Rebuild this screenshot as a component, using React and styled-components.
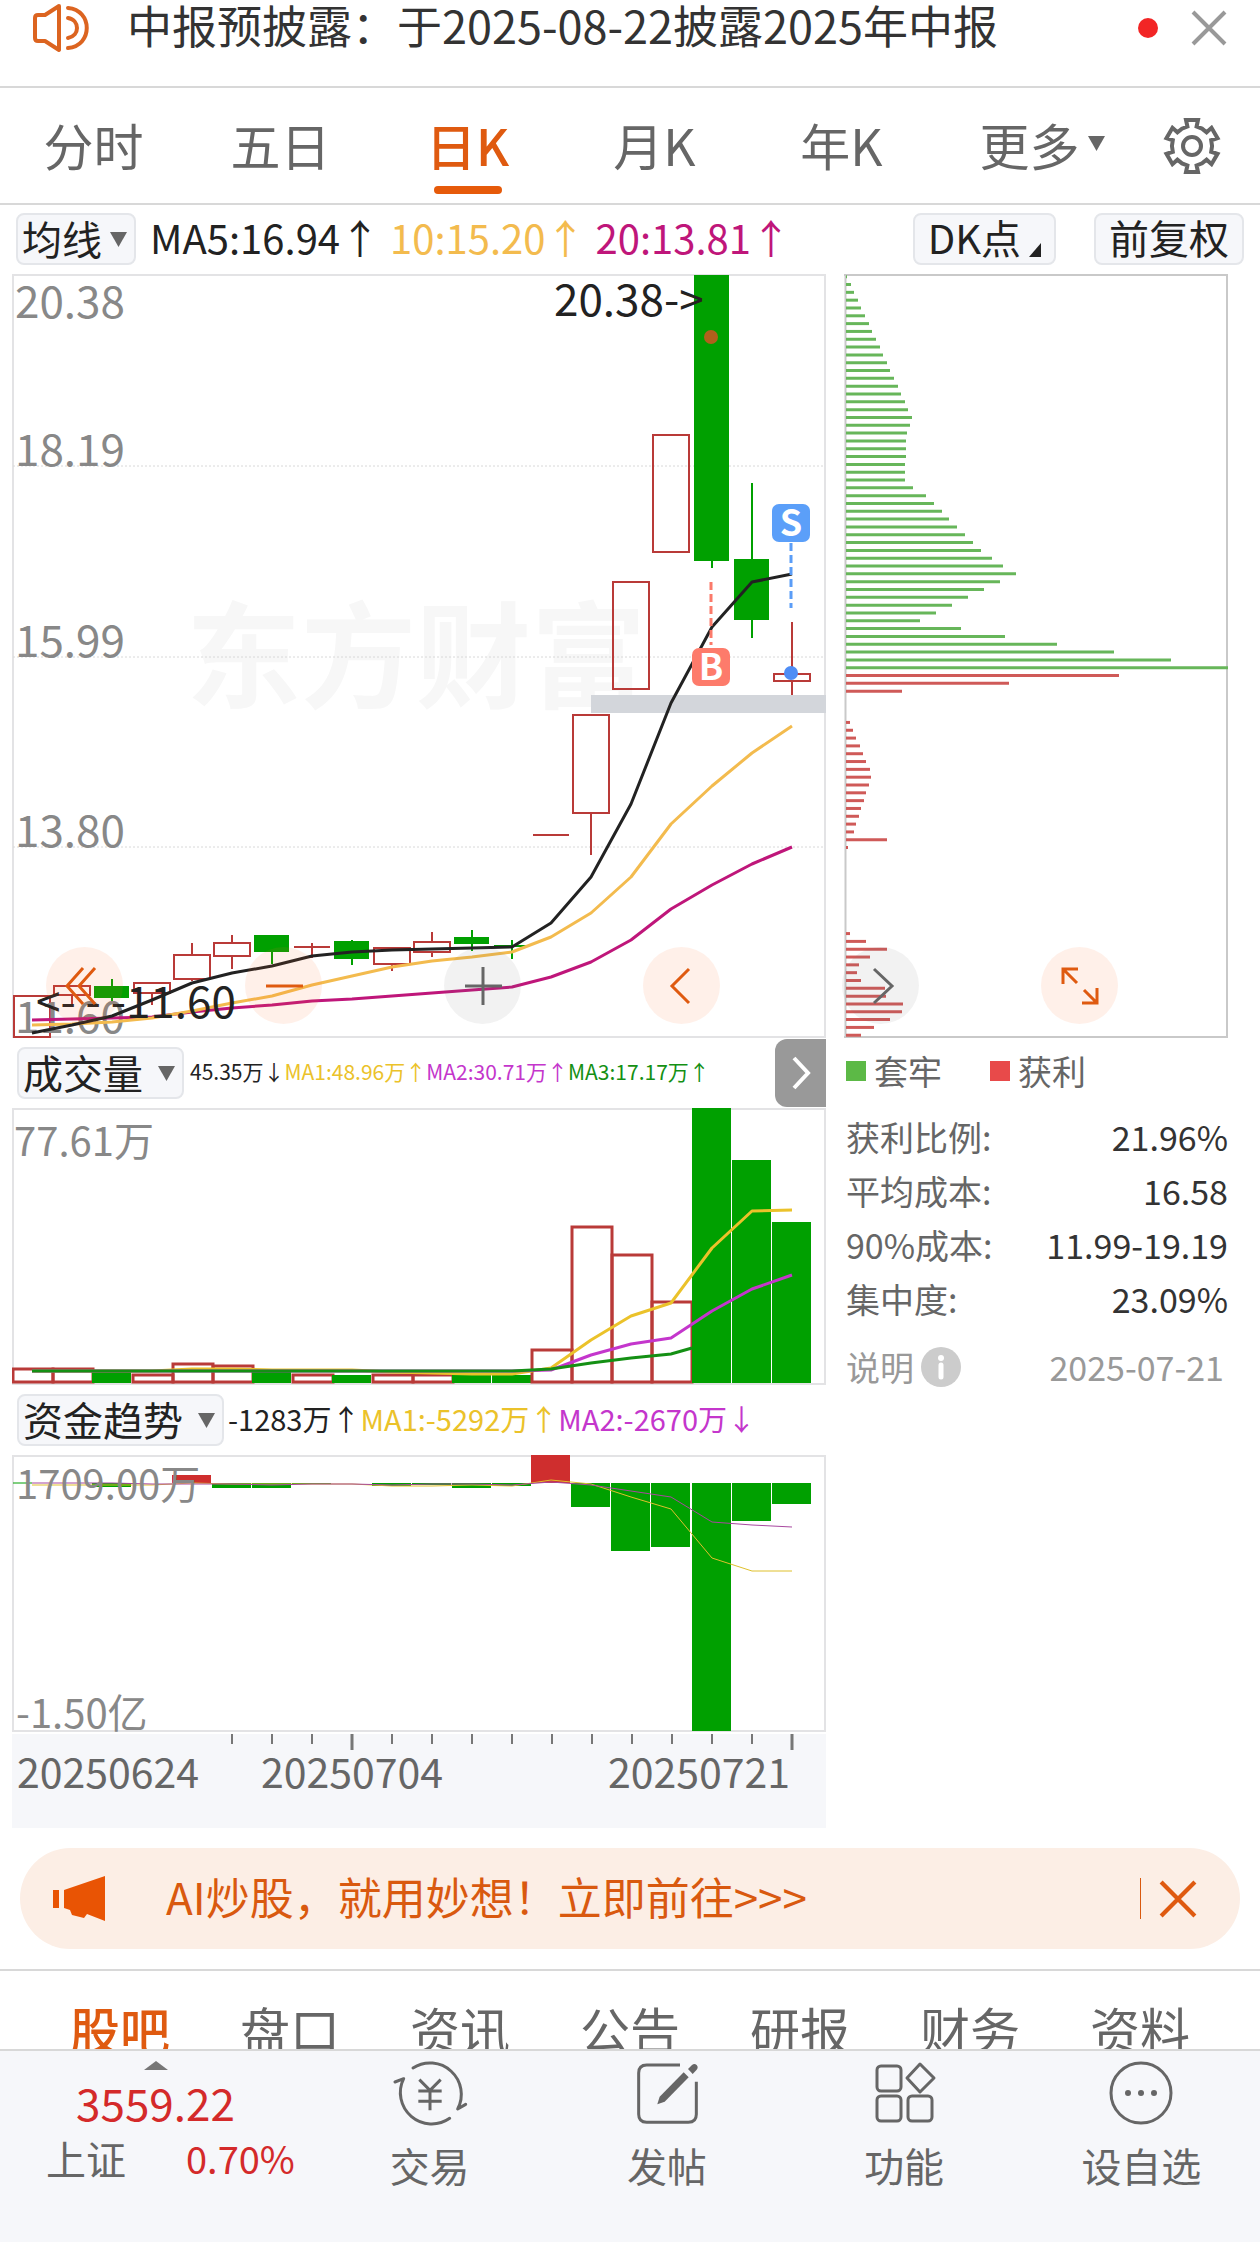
import React from "react";
import styled, { createGlobalStyle } from "styled-components";

const FONT = '"Noto Sans CJK SC", "Noto Sans", sans-serif';
const ORANGE = "#df5a10";
const GREEN = "#00a000";
const RED = "#b93a38";

const Global = createGlobalStyle`
  *, *::before, *::after { box-sizing: border-box; }
  body { margin: 0; background: #fff; font-family: ${FONT}; color: #262626; }
  button, select { font: inherit; color: inherit; background: none; border: 0; padding: 0; margin: 0; cursor: pointer; }
  svg { display: block; }
  svg text { font-family: ${FONT}; }
  a { color: inherit; text-decoration: none; }
`;

const Page = styled.div`
  display: flex;
  flex-direction: column;
  min-height: 100vh;
`;

/* ---------- notice ---------- */
const Notice = styled.header`
  display: flex;
  align-items: center;
  height: 88px;
  padding: 0 33px 31px;
  border-bottom: 2px solid #d8d8d8;
  font-size: 45px;
  line-height: 56px;
  color: #333;
  white-space: nowrap;
`;
const NoticeText = styled.a`
  margin-left: 36px;
  padding-bottom: 6px;
  flex: 1;
`;
const Dot = styled.span`
  width: 20px;
  height: 20px;
  border-radius: 50%;
  background: #f22525;
  margin-right: 33px;
`;

/* ---------- period tabs ---------- */
const Periods = styled.nav`
  display: grid;
  grid-template-columns: repeat(5, 187fr) 214fr 85fr;
  height: 117px;
  padding-right: 26px;
  border-bottom: 2px solid #d8d8d8;
`;
const Period = styled.button`
  display: flex;
  align-items: center;
  justify-content: center;
  gap: 8px;
  position: relative;
  padding-bottom: ${(p) => (p.$icon ? 0 : 4)}px;
  font-size: 50px;
  line-height: 60px;
  color: ${(p) => (p.$active ? ORANGE : "#666")};
  font-weight: ${(p) => (p.$active ? 500 : 400)};
  &::after {
    content: "";
    display: ${(p) => (p.$active ? "block" : "none")};
    position: absolute;
    left: 50%;
    bottom: 9px;
    width: 68px;
    height: 8px;
    margin-left: -34px;
    border-radius: 4px;
    background: #e65a0a;
  }
`;

/* ---------- average line toolbar ---------- */
const Toolbar = styled.div`
  display: flex;
  align-items: center;
  height: 69px;
  padding: 0 16px 2px;
  font-size: 40px;
  line-height: 48px;
  white-space: nowrap;
`;
const chip = `
  height: 52px;
  border: 2px solid #e4e6ea;
  border-radius: 8px;
  background: #f6f7fa;
  color: #222;
  font-size: 40px;
  line-height: 44px;
`;
const ChipButton = styled.button`
  ${chip}
  display: flex;
  align-items: center;
  gap: 8px;
  padding: 0 13px 4px;
  margin-left: ${(p) => (p.$push ? "auto" : "38px")};
`;
const Corner = styled.span`
  align-self: flex-end;
  margin-bottom: 2px;
  border-left: 12px solid transparent;
  border-bottom: 14px solid #222;
`;
const Picker = styled.span`
  position: relative;
  display: block;
  svg {
    position: absolute;
    right: 9px;
    top: 19px;
    pointer-events: none;
  }
`;
const PickerSelect = styled.select`
  ${chip}
  display: block;
  appearance: none;
  width: ${(p) => p.$w}px;
  padding: 0 0 2px 4px;
`;
const Values = styled.div`
  display: flex;
  gap: ${(p) => p.$gap || 0}px;
  margin-left: ${(p) => p.$left || 0}px;
  padding-bottom: 4px;
  font-size: ${(p) => p.$size}px;
`;
const Value = styled.span`
  color: ${(p) => p.$color};
`;

/* ---------- charts ---------- */
const Board = styled.main`
  position: relative;
  display: grid;
  grid-template-columns: 814fr 384fr;
  column-gap: 18px;
  padding: 0 32px 0 12px;
`;
const Column = styled.section`
  min-width: 0;
`;
const Chart = styled.svg`
  width: 100%;
  height: auto;
`;
const IndicatorBar = styled.div`
  display: flex;
  align-items: center;
  height: 70px;
  padding-left: 5px;
  line-height: 48px;
  white-space: nowrap;
`;
const Expand = styled.button`
  display: flex;
  align-items: center;
  justify-content: center;
  align-self: stretch;
  width: 51px;
  margin: 1px 0 1px auto;
  border-radius: 12px 0 0 12px;
  background: #999;
`;
const Controls = styled.div`
  position: absolute;
  left: 46px;
  right: 142px;
  top: 673px;
  display: flex;
  justify-content: space-between;
`;
const Round = styled.button`
  width: 77px;
  height: 77px;
  border-radius: 50%;
  display: flex;
  align-items: center;
  justify-content: center;
  color: ${(p) => (p.$muted ? "#666" : ORANGE)};
  background: ${(p) => (p.$muted ? "rgba(110,110,110,.09)" : "rgba(255,110,40,.1)")};
`;

/* ---------- chip statistics ---------- */
const Legend = styled.div`
  display: flex;
  align-items: center;
  gap: 48px;
  height: 66px;
  padding-left: 2px;
  font-size: 34px;
  line-height: 48px;
  color: #666;
`;
const Key = styled.span`
  display: flex;
  align-items: center;
  gap: 8px;
  &::before {
    content: "";
    width: 20px;
    height: 20px;
    background: ${(p) => p.$color};
  }
`;
const Stats = styled.dl`
  margin: 6px 0 0;
  padding-left: 2px;
  font-size: 34px;
  line-height: 54px;
`;
const Stat = styled.div`
  display: flex;
  justify-content: space-between;
  white-space: nowrap;
  dt { color: #666; }
  dd { margin: 0; color: #333; }
`;
const Footnote = styled.div`
  display: flex;
  align-items: center;
  justify-content: space-between;
  margin-top: 14px;
  padding: 0 4px 0 2px;
  font-size: 34px;
  line-height: 54px;
  color: #999;
`;
const Explain = styled.button`
  display: flex;
  align-items: center;
  gap: 7px;
`;

/* ---------- banner ---------- */
const Banner = styled.aside`
  display: flex;
  align-items: center;
  height: 101px;
  margin: 20px;
  padding: 0 43px 0 33px;
  border-radius: 51px;
  background: #fceee5;
  color: #d9590f;
  font-size: 44px;
  line-height: 56px;
  white-space: nowrap;
`;
const BannerLink = styled.a`
  flex: 1;
  margin-left: 60px;
  padding-bottom: 6px;
`;
const BannerClose = styled.button`
  display: flex;
  align-items: center;
  height: 41px;
  padding-left: 18px;
  border-left: 1px solid #d9590f;
`;

/* ---------- section tabs ---------- */
const Sections = styled.nav`
  display: flex;
  height: 80px;
  padding: 27px 35px 0;
  overflow: hidden;
  border-top: 2px solid #d8d8d8;
`;
const Section = styled.button`
  flex: 1;
  align-self: flex-start;
  font-size: 50px;
  line-height: 60px;
  color: ${(p) => (p.$active ? ORANGE : "#666")};
  font-weight: ${(p) => (p.$active ? 500 : 400)};
`;

/* ---------- bottom bar ---------- */
const BottomBar = styled.footer`
  display: flex;
  flex: 1;
  min-height: 193px;
  border-top: 2px solid #d8d8d8;
  background: #f6f7fa;
  color: #666;
  font-size: 40px;
  line-height: 56px;
`;
const Index = styled.button`
  display: flex;
  flex-direction: column;
  align-items: center;
  width: 311px;
  padding-top: 10px;
`;
const Price = styled.span`
  margin-top: 4px;
  font-size: 44px;
  color: #d42a2a;
`;
const Change = styled.span`
  display: flex;
  gap: 60px;
  width: 100%;
  padding-left: 46px;
  b { font-weight: 400; font-size: 38px; color: #d42a2a; }
`;
const Action = styled.button`
  display: flex;
  flex-direction: column;
  align-items: center;
  flex: 1;
  gap: 10px;
  padding-top: 6px;
`;

/* ---------- data ---------- */
const cx = (i) => 32 + i * 40 - (i > 12 && i < 17 ? 1 : 0);

const candles = [
  { t: "h", a: 996, b: 1037 },
  { t: "h", a: 986, b: 995, lo: 1004 },
  { t: "g", a: 986, b: 998, hi: 979, lo: 1001 },
  { t: "h", a: 983, b: 993, lo: 1005 },
  { t: "h", a: 955, b: 979, hi: 943, lo: 981 },
  { t: "h", a: 943, b: 956, hi: 935, lo: 969 },
  { t: "g", a: 935, b: 952, lo: 964 },
  { t: "d", a: 947, b: 947, hi: 943, lo: 958 },
  { t: "g", a: 941, b: 959, hi: 940, lo: 965 },
  { t: "h", a: 948, b: 964, lo: 971 },
  { t: "h", a: 942, b: 952, hi: 932, lo: 957 },
  { t: "g", a: 937, b: 944, hi: 930, lo: 951 },
  { t: "g", a: 945, b: 947, hi: 940, lo: 959 },
  { t: "d", a: 835, b: 835 },
  { t: "h", a: 715, b: 813, lo: 855 },
  { t: "h", a: 582, b: 689 },
  { t: "h", a: 435, b: 552 },
  { t: "g", a: 275, b: 561, lo: 568 },
  { t: "g", a: 559, b: 620, hi: 483, lo: 638 },
  { t: "h", a: 674, b: 681, hi: 622, lo: 695 },
];
const ma5 = [1033, 1025, 1016, 1000, 983, 973, 966, 956, 952, 950, 949, 948, 947, 923, 877, 804, 703, 627, 582, 574];
const ma10 = [1025, 1024, 1022, 1018, 1011, 1003, 996, 985, 976, 967, 961, 957, 952, 937, 913, 877, 824, 786, 753, 726];
const ma20 = [1020, 1019, 1018, 1017, 1012, 1008, 1005, 1001, 999, 996, 993, 990, 987, 977, 962, 940, 909, 885, 864, 847];

const volumes = [
  ["h", 1369], ["h", 1369], ["g", 1371], ["h", 1375], ["h", 1364], ["h", 1366], ["g", 1370],
  ["h", 1375], ["g", 1375], ["h", 1375], ["h", 1375], ["g", 1375], ["g", 1375], ["h", 1350],
  ["h", 1227], ["h", 1255], ["h", 1302], ["g", 1108], ["g", 1160], ["g", 1222],
];
const vol1 = [1371, 1371, 1371, 1371, 1369, 1369, 1370, 1370, 1370, 1372, 1373, 1374, 1374, 1368, 1340, 1316, 1303, 1248, 1211, 1210];
const vol2 = [1371, 1371, 1371, 1371, 1371, 1371, 1371, 1371, 1371, 1371, 1371, 1371, 1371, 1370, 1355, 1344, 1338, 1311, 1289, 1275];
const vol3 = [1371, 1371, 1371, 1371, 1371, 1371, 1371, 1371, 1371, 1371, 1371, 1371, 1371, 1369, 1363, 1358, 1354, 1342, 1332, 1322];

const funds = [0, 0, 4, 0, -8, 5, 5, 1, 0, 3, 2, 5, 3, -28, 24, 68, 64, 248, 38, 21];
const fund1 = [1485, 1485, 1485, 1485, 1483, 1484, 1484, 1484, 1484, 1486, 1486, 1485, 1486, 1480, 1484, 1497, 1509, 1558, 1571, 1571];
const fund2 = [1483, 1483, 1483, 1484, 1484, 1484, 1485, 1484, 1484, 1485, 1484, 1484, 1485, 1482, 1485, 1491, 1497, 1522, 1525, 1527];

const trapped = [
  1, 5, 8, 12, 15, 19, 23, 26, 30, 34, 37, 41, 44, 48, 52, 55, 59, 62, 66, 64, 61, 60, 60, 60, 59, 59, 59,
  67, 80, 88, 96, 103, 111, 119, 127, 135, 146, 157, 170, 154, 138, 122, 106, 90, 74, 115, 159, 211, 268, 325, 382,
];
const profit = [
  [51, [273, 163, 56]],
  [57, [4, 7, 10, 14, 17, 20, 24, 25, 23, 20, 18, 15, 13, 10, 8, 41, 2]],
  [84, [4, 20, 41, 24, 13, 11, 15, 39, 40, 57, 56, 44, 28, 15]],
];

const path = (ys) => ys.map((y, i) => `${cx(i)},${y}`).join(" ");

const Line = ({ ys, color, width = 3 }) => (
  <polyline points={path(ys)} fill="none" stroke={color} strokeWidth={width} strokeLinejoin="round" />
);

const Triangle = ({ w = 17, h = 15 }) => (
  <svg width={w} height={h} viewBox="0 0 17 15" aria-hidden="true">
    <path d="M0 0H17L8.5 15Z" fill="#666" />
  </svg>
);

const Cross = ({ size, color, width }) => (
  <svg width={size} height={size} viewBox="0 0 36 36" aria-hidden="true">
    <path d="M2 2L34 34M34 2L2 34" stroke={color} strokeWidth={width} fill="none" />
  </svg>
);

function Candle({ i, c }) {
  const x = cx(i);
  const color = c.t === "g" ? GREEN : RED;
  return (
    <g stroke={color} strokeWidth="2">
      {c.hi && <path d={`M${x} ${c.hi}V${c.a}`} />}
      {c.lo && <path d={`M${x} ${c.b}V${c.lo}`} />}
      {c.t === "h" && <rect x={x - 18} y={c.a} width="36" height={c.b - c.a} fill="none" />}
      {c.t === "g" && <rect x={x - 18} y={c.a} width="35" height={c.b - c.a} fill={GREEN} stroke="none" />}
      {c.t === "d" && <path d={`M${x - 18} ${c.a}H${x + 18}`} />}
    </g>
  );
}

function Badge({ x, y, color, children }) {
  return (
    <g>
      <rect x={x - 19} y={y} width="38" height="38" rx="7" fill={color} />
      <text x={x} y={y + 32} fontSize="36" fontWeight="700" textAnchor="middle" fill="#fff">{children}</text>
    </g>
  );
}

function PriceChart() {
  return (
    <Chart viewBox="12 274 814 764" role="img" aria-label="日K">
      <text x="186" y="699" fontSize="115" fontWeight="700" fill="#f7f7f7">东方财富</text>
      <rect x="13" y="275" width="812" height="762" fill="none" stroke="#e3e3e5" strokeWidth="2" />
      {[466, 657, 847].map((y) => (
        <path key={y} d={`M13 ${y}H825`} stroke="#d8d8d8" strokeWidth="1" strokeDasharray="2 2" />
      ))}
      <rect x="591" y="695" width="235" height="18" fill="#d3d6db" />
      {candles.map((c, i) => <Candle key={i} i={i} c={c} />)}
      <g fontSize="44" fill="#888">
        <text x="15" y="318">20.38</text>
        <text x="15" y="466">18.19</text>
        <text x="15" y="657">15.99</text>
        <text x="15" y="847">13.80</text>
        <text x="15" y="1033">11.60</text>
      </g>
      <Line ys={ma20} color="#bf167a" />
      <Line ys={ma10} color="#f3bb4e" />
      <Line ys={ma5} color="#222" />
      <g fontSize="44" fill="#222">
        <text x="554" y="316">20.38-&gt;</text>
        <text x="36" y="1018">&lt;- - -11.60</text>
      </g>
      <circle cx="711" cy="337" r="7" fill="#b0601c" />
      <path d="M711 582V645" stroke="#fb7a6a" strokeWidth="3" strokeDasharray="8 4" />
      <path d="M791 543V608" stroke="#5b9df7" strokeWidth="3" strokeDasharray="8 4" />
      <circle cx="791" cy="673" r="7" fill="#4f8df5" />
      <Badge x={711} y={648} color="#fd7b6b">B</Badge>
      <Badge x={791} y={504} color="#5b9ff9">S</Badge>
    </Chart>
  );
}

function VolumeChart() {
  return (
    <Chart viewBox="12 1108 814 277" role="img" aria-label="成交量">
      <rect x="13" y="1109" width="812" height="275" fill="none" stroke="#e3e3e5" strokeWidth="2" />
      <text x="14" y="1156" fontSize="40" fill="#888">77.61万</text>
      {volumes.map(([t, y], i) =>
        t === "h" ? (
          <rect key={i} x={cx(i) - 19} y={y} width="40" height={1382 - y} fill="none" stroke={RED} strokeWidth="3" />
        ) : (
          <rect key={i} x={cx(i) - 20} y={y} width="39" height={1383 - y} fill={GREEN} />
        )
      )}
      <Line ys={vol1} color="#ebc22a" />
      <Line ys={vol2} color="#c436cc" />
      <polyline points={path(vol3.slice(0, 17)) + " 692,1348"} fill="none" stroke="#149014" strokeWidth="3" />
    </Chart>
  );
}

function FundChart() {
  return (
    <Chart viewBox="12 1455 814 277" role="img" aria-label="资金趋势">
      <rect x="13" y="1456" width="812" height="275" fill="none" stroke="#e3e3e5" strokeWidth="2" />
      <path d="M13 1483H32" stroke={GREEN} strokeWidth="1" />
      {funds.map((v, i) =>
        v < 0 ? (
          <rect key={i} x={cx(i) - 20} y={1483 + v} width="39" height={-v} fill="#cf2e2e" />
        ) : (
          <rect key={i} x={cx(i) - 20} y="1483" width="39" height={v} fill={GREEN} />
        )
      )}
      <Line ys={fund1} color="#dfc02c" width={1} />
      <Line ys={fund2} color="#a8489f" width={1} />
      <g fontSize="40" fill="#888">
        <text x="16" y="1499">1709.00万</text>
        <text x="16" y="1728">-1.50亿</text>
      </g>
    </Chart>
  );
}

function DateAxis() {
  const ticks = Array.from({ length: 15 }, (_, i) => 232 + i * 40);
  return (
    <Chart viewBox="12 1732 814 96" role="img" aria-label="日期">
      <rect x="12" y="1734" width="814" height="94" fill="#f6f7fa" />
      {ticks.map((x, i) => {
        const major = i === 3 || i === 14;
        return <path key={x} d={`M${x} 1734V${major ? 1750 : 1744}`} stroke="#777" strokeWidth={major ? 3 : 2} />;
      })}
      <g fontSize="41" fill="#666">
        <text x="17" y="1788">20250624</text>
        <text x="352" y="1788" textAnchor="middle">20250704</text>
        <text x="790" y="1788" textAnchor="end">20250721</text>
      </g>
    </Chart>
  );
}

const barY = (k) => 276.7 + k * 7.82;

function ChipChart() {
  return (
    <Chart viewBox="844 274 384 764" role="img" aria-label="筹码分布">
      <path d="M844 275H1228M844 1037H1228M845.5 275V1037M1227 275V1037" stroke="#c9c9c9" strokeWidth="2" fill="none" />
      <g stroke="#67b65a" strokeWidth="3">
        {trapped.map((w, k) => <path key={k} d={`M846 ${barY(k)}h${w}`} />)}
      </g>
      <g stroke="#cf5a58" strokeWidth="3">
        {profit.map(([start, list]) =>
          list.map((w, k) => <path key={start + k} d={`M846 ${barY(start + k)}h${w}`} />)
        )}
      </g>
    </Chart>
  );
}

const gearPoints = [0, 60, 120, 180, 240, 300]
  .flatMap((deg) => {
    const r = (deg * Math.PI) / 180;
    return [[-4.6, -19.5], [-6, -26], [6, -26], [4.6, -19.5], [10, -17.4]].map(
      ([x, y]) => `${(x * Math.cos(r) - y * Math.sin(r)).toFixed(2)},${(x * Math.sin(r) + y * Math.cos(r)).toFixed(2)}`
    );
  })
  .join(" ");

const Gear = () => (
  <svg width="60" height="60" viewBox="-30 -30 60 60" fill="none" stroke="#666" strokeWidth="4" aria-hidden="true">
    <polygon points={gearPoints} />
    <circle r="9" />
  </svg>
);

const Speaker = () => (
  <svg width="58" height="50" viewBox="0 0 58 50" fill="none" stroke="#dc6420" strokeWidth="4" strokeLinejoin="round" strokeLinecap="round" aria-hidden="true">
    <path d="M26 3L12 12H5Q2 12 2 15V35Q2 38 5 38H12L26 47Z" />
    <path d="M35 5C60 7 60 43 35 45M35 15C47 17 47 33 35 35" />
  </svg>
);

const icons = {
  trade: (
    <svg width="78" height="70" viewBox="30 20 234 210" fill="none" stroke="#666" strokeWidth="9" strokeLinecap="round" aria-hidden="true">
      <path d="M96 53A94 94 0 0 1 230 176L254 162M206 204A94 94 0 0 1 68 85L42 95" strokeLinejoin="round" />
      <path d="M115 88L147 120L179 88M147 120V180M112 122H182M112 153H182" strokeLinecap="butt" />
    </svg>
  ),
  post: (
    <svg width="78" height="70" viewBox="741 20 234 210" aria-hidden="true">
      <path d="M897 44H797Q773 44 773 68V192Q773 216 797 216H922Q946 216 946 192V94" fill="none" stroke="#666" strokeWidth="9" />
      <path d="M829 162L836 139L908 66L923 81L851 154Z" fill="#666" />
      <path d="M921 56L933 44Q940 38 947 44Q953 51 947 58L935 71Z" fill="#666" />
    </svg>
  ),
  tools: (
    <svg width="78" height="70" viewBox="864 2057 78 70" fill="none" stroke="#666" strokeWidth="3" aria-hidden="true">
      <rect x="876" y="2066" width="24" height="25" rx="4" />
      <rect x="876" y="2096" width="24" height="25" rx="4" />
      <rect x="907" y="2096" width="24" height="25" rx="4" />
      <path d="M919 2064L933 2078L919 2092L906 2078Z" strokeLinejoin="round" />
    </svg>
  ),
  more: (
    <svg width="78" height="70" viewBox="0 0 78 70" aria-hidden="true">
      <circle cx="39" cy="36" r="30" fill="none" stroke="#666" strokeWidth="3" />
      <g fill="#666"><circle cx="26" cy="36" r="3" /><circle cx="39" cy="36" r="3" /><circle cx="52" cy="36" r="3" /></g>
    </svg>
  ),
};

const periods = ["分时", "五日", "日K", "月K", "年K"];
const sections = ["股吧", "盘口", "资讯", "公告", "研报", "财务", "资料"];
const stats = [["获利比例:", "21.96%"], ["平均成本:", "16.58"], ["90%成本:", "11.99-19.19"], ["集中度:", "23.09%"]];
const actions = [["trade", "交易"], ["post", "发帖"], ["tools", "功能"], ["more", "设自选"]];

const controls = [
  ["最早", false, <path key="p" d="M-2 -18L-18 0L-2 18M10 -18L-6 0L10 18" />],
  ["缩小", false, <path key="p" d="M-18 0H19" />],
  ["放大", true, <path key="p" d="M-18 0H19M0 -19V19" />],
  ["向左", false, <path key="p" d="M7 -17L-10 0L7 17" />],
  ["向右", true, <path key="p" d="M-7 -17L11 0L-7 17" />],
  ["全屏", false, <path key="p" d="M-2 -17H-17V-2M-17 -17L-3 -3M4 4L17 17M2 17H17V2" />],
];

function Picklist({ label, width }) {
  return (
    <Picker>
      <PickerSelect $w={width} aria-label={label} defaultValue={label}>
        <option>{label}</option>
      </PickerSelect>
      <Triangle />
    </Picker>
  );
}

export default function App() {
  return (
    <Page>
      <Global />
      <Notice>
        <Speaker />
        <NoticeText href="#notice">中报预披露：于2025-08-22披露2025年中报</NoticeText>
        <Dot />
        <button aria-label="关闭公告"><Cross size={36} color="#999" width={4} /></button>
      </Notice>

      <Periods>
        {periods.map((p) => <Period key={p} $active={p === "日K"}>{p}</Period>)}
        <Period>更多<Triangle /></Period>
        <Period $icon aria-label="设置"><Gear /></Period>
      </Periods>

      <Toolbar>
        <Picklist label="均线" width={120} />
        <Values $size={40} $gap={10} $left={14}>
          <Value $color="#222">MA5:16.94↑</Value>
          <Value $color="#f3bb4e">10:15.20↑</Value>
          <Value $color="#bf167a">20:13.81↑</Value>
        </Values>
        <ChipButton $push>DK点<Corner /></ChipButton>
        <ChipButton>前复权</ChipButton>
      </Toolbar>

      <Board>
        <Column>
          <PriceChart />
          <IndicatorBar>
            <Picklist label="成交量" width={167} />
            <Values $size={21} $left={6}>
              <Value $color="#222">45.35万↓</Value>
              <Value $color="#ebc22a">MA1:48.96万↑</Value>
              <Value $color="#c436cc">MA2:30.71万↑</Value>
              <Value $color="#149014">MA3:17.17万↑</Value>
            </Values>
            <Expand aria-label="展开">
              <svg width="20" height="34" viewBox="0 0 20 34" fill="none" stroke="#fff" strokeWidth="4" aria-hidden="true">
                <path d="M3 2L17 17L3 32" />
              </svg>
            </Expand>
          </IndicatorBar>
          <VolumeChart />
          <IndicatorBar>
            <Picklist label="资金趋势" width={207} />
            <Values $size={29} $left={4}>
              <Value $color="#222">-1283万↑</Value>
              <Value $color="#ebc22a">MA1:-5292万↑</Value>
              <Value $color="#c436cc">MA2:-2670万↓</Value>
            </Values>
          </IndicatorBar>
          <FundChart />
          <DateAxis />
        </Column>

        <Column>
          <ChipChart />
          <Legend>
            <Key $color="#5cb946">套牢</Key>
            <Key $color="#e84a4a">获利</Key>
          </Legend>
          <Stats>
            {stats.map(([k, v]) => <Stat key={k}><dt>{k}</dt><dd>{v}</dd></Stat>)}
          </Stats>
          <Footnote>
            <Explain>
              说明
              <svg width="40" height="40" viewBox="0 0 40 40" aria-hidden="true">
                <circle cx="20" cy="20" r="20" fill="#ccc" />
                <path d="M20 18V30" stroke="#fff" strokeWidth="5" strokeLinecap="round" />
                <circle cx="20" cy="11" r="3" fill="#fff" />
              </svg>
            </Explain>
            <span>2025-07-21</span>
          </Footnote>
        </Column>

        <Controls>
          {controls.map(([label, muted, shape]) => (
            <Round key={label} aria-label={label} $muted={muted}>
              <svg width="44" height="44" viewBox="-22 -22 44 44" fill="none" stroke="currentColor" strokeWidth="3" aria-hidden="true">{shape}</svg>
            </Round>
          ))}
        </Controls>
      </Board>

      <Banner>
        <svg width="53" height="45" viewBox="0 0 53 45" fill="#e95404" aria-hidden="true">
          <path d="M0 14H6V32H0Z" />
          <path d="M11 14L52 0V45L34 38L31 42L19 39L17 34L11 32Z" />
        </svg>
        <BannerLink href="#ai">AI炒股，就用妙想！立即前往&gt;&gt;&gt;</BannerLink>
        <BannerClose aria-label="关闭广告"><Cross size={38} color="#df5a10" width={4} /></BannerClose>
      </Banner>

      <Sections>
        {sections.map((s) => <Section key={s} $active={s === "股吧"}>{s}</Section>)}
      </Sections>

      <BottomBar>
        <Index>
          <svg width="24" height="9" viewBox="0 0 24 9" aria-hidden="true"><path d="M12 0L24 9H0Z" fill="#777" /></svg>
          <Price>3559.22</Price>
          <Change>上证<b>0.70%</b></Change>
        </Index>
        {actions.map(([icon, label]) => <Action key={icon}>{icons[icon]}<span>{label}</span></Action>)}
      </BottomBar>
    </Page>
  );
}
